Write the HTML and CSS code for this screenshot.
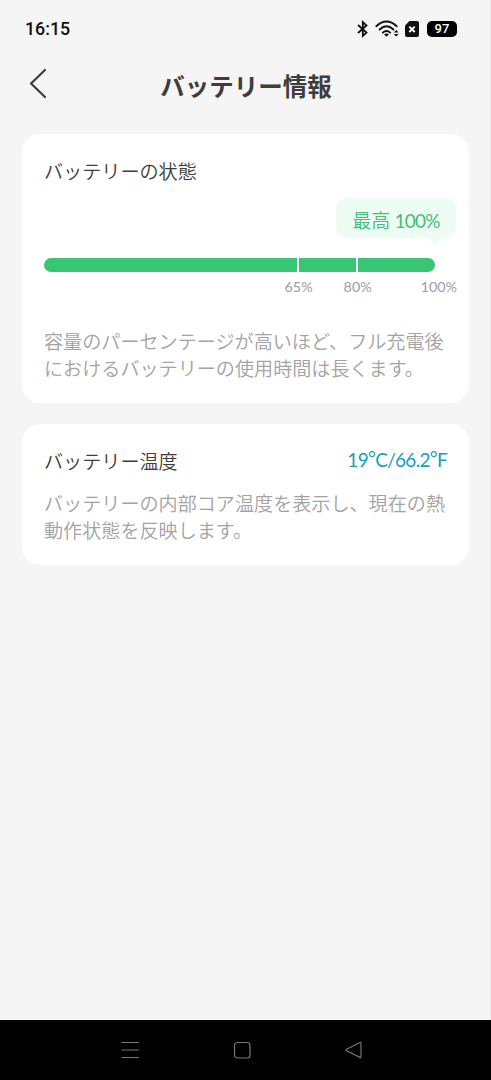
FILE: index.html
```html
<!DOCTYPE html>
<html lang="ja">
<head>
<meta charset="utf-8">
<title>バッテリー情報</title>
<link rel="stylesheet" href="styles.css">
</head>
<body>
<div class="screen">
  <div class="status">
    <span class="clock">16:15</span>
    <div class="status-icons">
      <svg class="bluetooth" width="14" height="20" viewBox="0 0 14 20"><path d="M2 6 10.5 13.5 6.8 17V3L10.5 6.5 2 14" fill="none" stroke="#111" stroke-width="1.8"/></svg>
      <svg class="wifi" width="24" height="20" viewBox="0 0 24 20"><g fill="none" stroke="#111" stroke-width="1.9" stroke-linecap="round"><path d="M1.3 7.2Q11.5-2.2 21.7 7.2"/><path d="M4.6 10.5Q11.5 4.2 18.4 10.5"/><path d="M7.8 13.6Q11.5 10.4 15.2 13.6"/></g><path d="M9 15.2Q11.5 13.6 14 15.2L11.5 17.8Z" fill="#111"/><path d="m18.8 13.4 2.4-2.4 2.4 2.4Zm0 1.6h4.8l-2.4 2.6Z" fill="#111"/></svg>
      <svg class="sim" width="14" height="18" viewBox="0 0 14 18"><path d="M4.5 1H12a2 2 0 0 1 2 2v12a2 2 0 0 1-2 2H2a2 2 0 0 1-2-2V5.5Z" fill="#111"/><path d="m4.3 6.6 5.4 5.4m0-5.4-5.4 5.4" stroke="#fff" stroke-width="1.9"/></svg>
      <span class="charge">97</span>
    </div>
  </div>
  <header class="header">
    <svg class="back" width="20" height="32" viewBox="0 0 20 32"><path d="M17 3 3 16.5 17 30" fill="none" stroke="#3d3d3d" stroke-width="2.2" stroke-linecap="round" stroke-linejoin="round"/></svg>
    <h1 class="title">バッテリー情報</h1>
  </header>
  <main class="cards">
    <section class="card card-health">
      <h2 class="label">バッテリーの状態</h2>
      <div class="bubble">最高 <span class="bubble-value">100%</span></div>
      <div class="bar"><i></i><i></i><i></i></div>
      <div class="scale"><span>65%</span><span>80%</span><span>100%</span></div>
      <p class="text">容量のパーセンテージが高いほど、フル充電後<br>におけるバッテリーの使用時間は長くます。</p>
    </section>
    <section class="card card-temp">
      <div class="row"><h2 class="label">バッテリー温度</h2><span class="temp">19<b>°</b>C/66.2<b>°</b>F</span></div>
      <p class="text">バッテリーの内部コア温度を表示し、現在の熱<br>動作状態を反映します。</p>
    </section>
  </main>
  <nav class="nav">
    <svg width="20" height="20" viewBox="0 0 20 20"><path d="M1.5 2.5h17.5M1.5 10h17.5M1.5 17.5h17.5"/></svg>
    <svg width="20" height="20" viewBox="0 0 20 20"><rect x="2.5" y="2.5" width="15.5" height="15.5" rx="3"/></svg>
    <svg width="20" height="20" viewBox="0 0 20 20"><path d="M16 2.5Q17 2 17 3.2V16.8Q17 18 16 17.4L2.6 10.7Q1.5 10 2.6 9.3Z"/></svg>
  </nav>
</div>
</body>
</html>
```
FILE: styles.css
```css
* { box-sizing: border-box; }
body {
  margin: 0;
  font-family: "Noto Sans CJK JP", sans-serif;
  background: #f5f5f5;
}
.screen {
  display: flex;
  flex-direction: column;
  width: 491px;
  height: 1080px;
  overflow: hidden;
}
.status {
  display: flex;
  justify-content: space-between;
  align-items: center;
  height: 58px;
  padding: 0 33px 0 25px;
  border-right: 1px solid #e9e9e9;
}
.clock {
  font: 500 17.8px/20px Roboto, sans-serif;
  color: #111;
}
.status-icons { display: flex; align-items: center; }
.bluetooth { margin-right: 5px; }
.wifi { margin-right: 6px; }
.charge {
  width: 30px;
  height: 16px;
  margin-left: 8px;
  border-radius: 5px;
  background: #000;
  color: #fff;
  font: 500 13px/16px Roboto, sans-serif;
  text-align: center;
}
.header {
  display: grid;
  grid-template-columns: 46px 1fr 46px;
  align-items: start;
  height: 76px;
  padding: 0 26px 0 28px;
  border-right: 1px solid #e9e9e9;
}
.back { margin-top: 9px; }
.title {
  margin: 10px 0 0;
  font-size: 24.5px;
  font-weight: 700;
  line-height: 36px;
  text-align: center;
  white-space: nowrap;
  color: #3d3d3d;
}
.cards {
  flex: 1;
  display: flex;
  flex-direction: column;
  gap: 21px;
  padding: 0 21px 0 22px;
  border-right: 1px solid #e9e9e9;
}
.card {
  padding: 0 22px;
  border-radius: 18px;
  background: #fff;
}
.card-health {
  display: flex;
  flex-direction: column;
  height: 269.4px;
  padding-top: 23px;
}
.card-temp { height: 141px; padding-top: 22.6px; }
.label {
  margin: 0;
  font-size: 19.1px;
  font-weight: 350;
  line-height: 28px;
  color: #3d3d3d;
}
.bubble {
  position: relative;
  align-self: flex-end;
  width: 120px;
  height: 40px;
  margin: 13px -9px 0 0;
  border-radius: 10px;
  background: #eefdf4;
  color: #45bd78;
  font-size: 19px;
  font-weight: 350;
  line-height: 43px;
  text-align: center;
  white-space: nowrap;
}
.bubble::after {
  content: "";
  position: absolute;
  top: 39px;
  left: 91px;
  border: solid transparent;
  border-width: 9px 8px 0;
  border-top-color: #eefdf4;
}
.bubble-value {
  font-family: Lato, sans-serif;
  font-size: 19px;
  font-weight: 400;
  letter-spacing: -0.8px;
}
.bar {
  display: grid;
  grid-template-columns: 253px 57px 77px;
  gap: 2px;
  flex: none;
  width: 391px;
  height: 14px;
  margin-top: 20px;
  border-radius: 7px;
  overflow: hidden;
}
.bar i { background: #38c674; }
.scale {
  display: flex;
  justify-content: flex-end;
  height: 20px;
  margin: 5px -10px 0 0;
  font: 14.3px/20px Lato, sans-serif;
  color: #9b9da8;
}
.scale span:nth-child(2) { margin-left: 31px; }
.scale span:nth-child(3) { margin-left: 49px; }
.text {
  margin: 0;
  font-size: 19.1px;
  font-weight: 350;
  line-height: 27px;
  white-space: nowrap;
  color: #a3a3a3;
}
.card-health .text { margin-top: 31px; }
.row {
  display: flex;
  justify-content: space-between;
}
.temp {
  font: 400 19px/25px Lato, sans-serif;
  letter-spacing: -0.7px;
  color: #1b9cb9;
}
.temp b {
  position: relative;
  top: -2px;
  font-weight: 400;
}
.card-temp .text { margin-top: 15.3px; }
.nav {
  display: flex;
  justify-content: space-between;
  align-items: center;
  height: 60px;
  padding: 0 127px 0 120px;
  background: #000;
}
.nav svg { fill: none; stroke: #777; stroke-width: 1.2; }
```
